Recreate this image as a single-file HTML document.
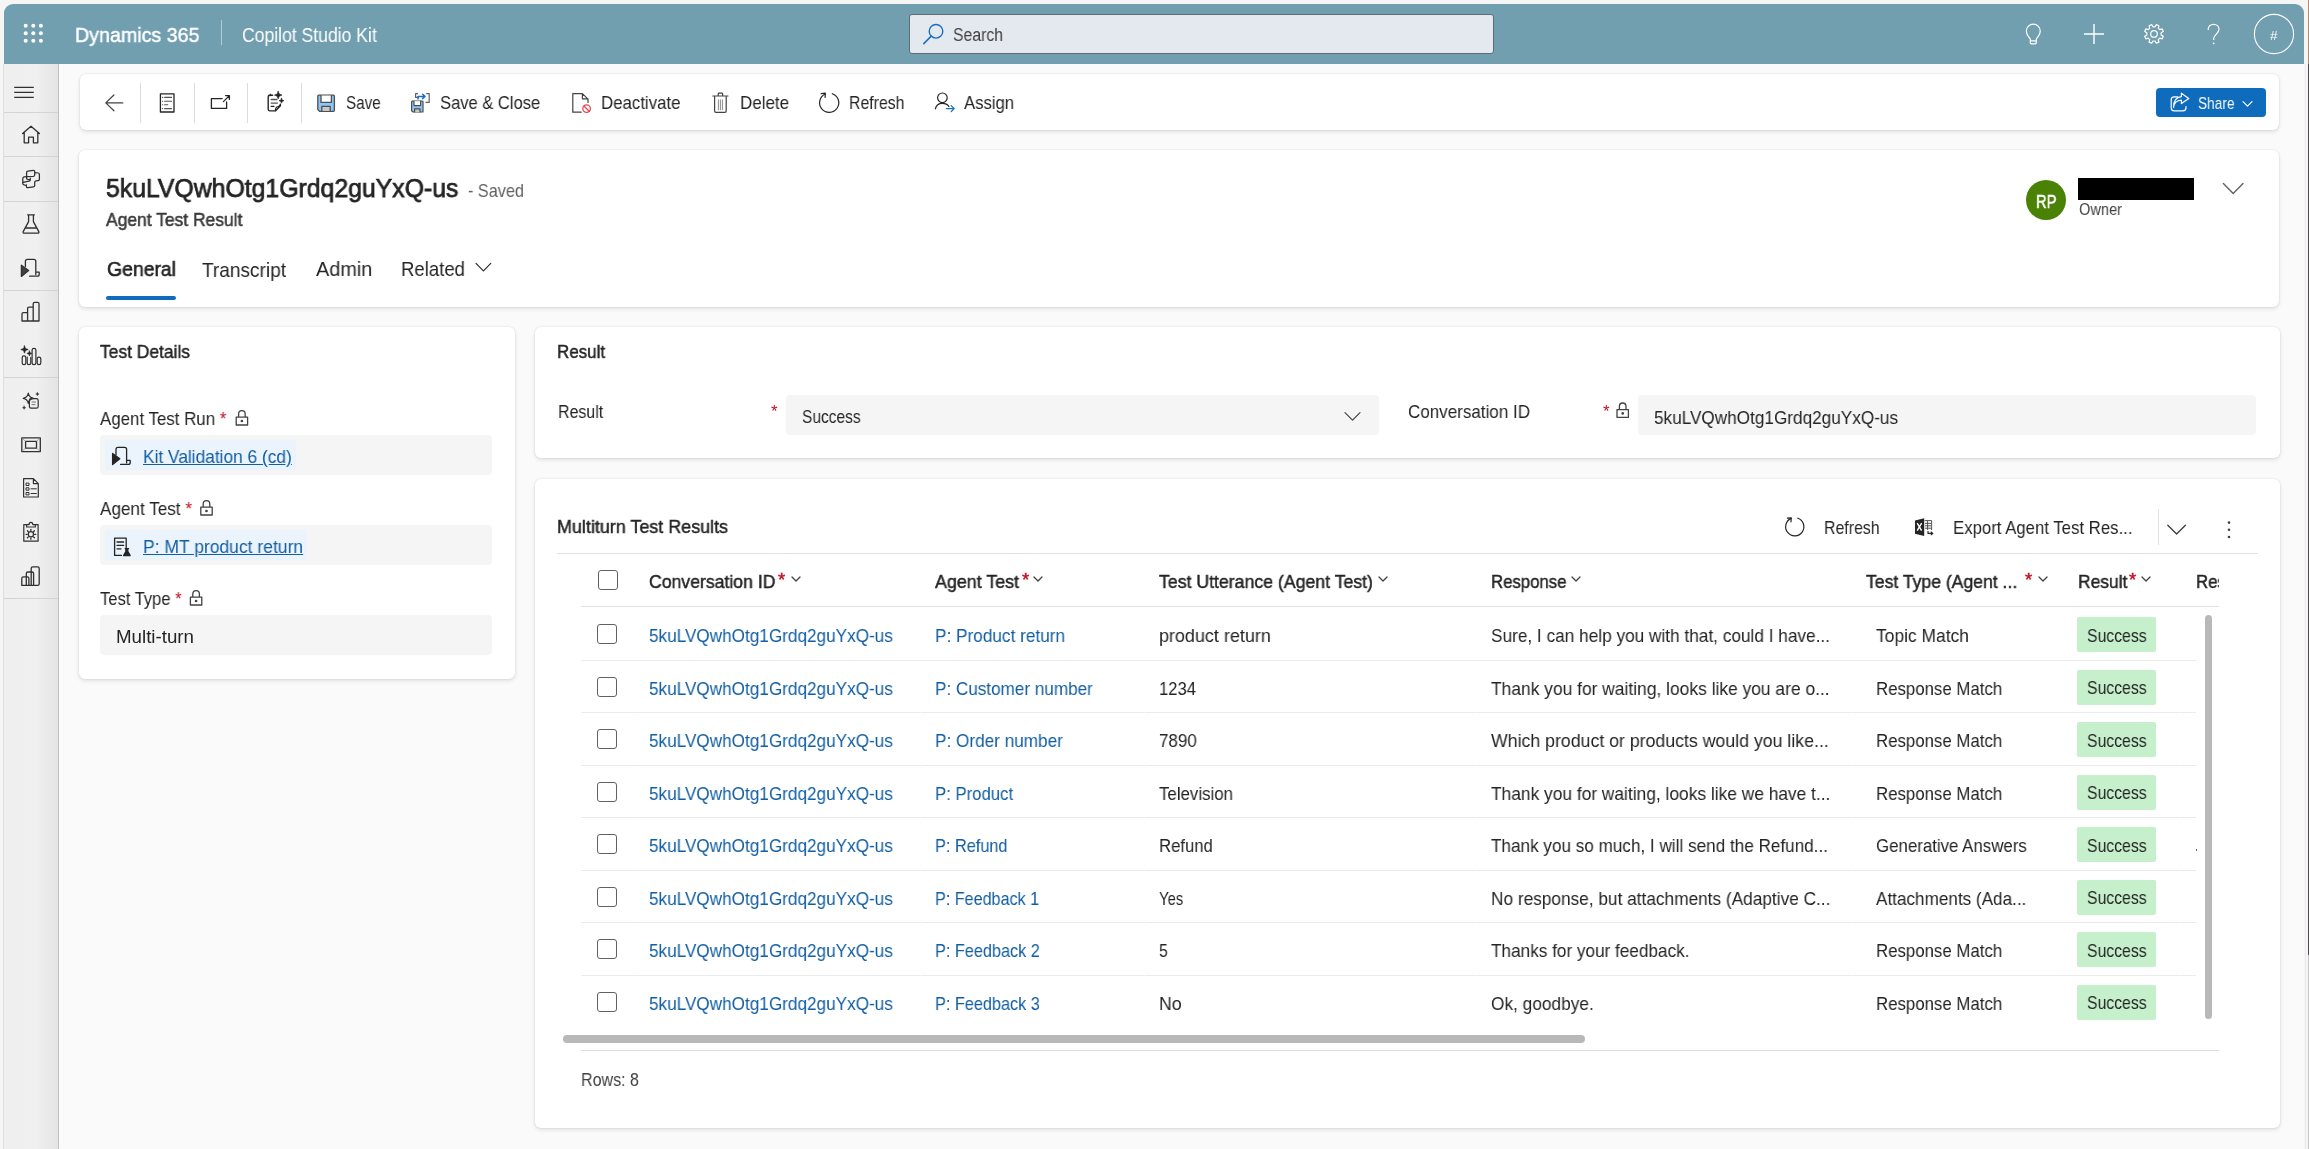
<!DOCTYPE html>
<html><head><meta charset="utf-8">
<style>
html,body{margin:0;padding:0;}
body{width:2309px;height:1149px;overflow:hidden;position:relative;background:#f5f5f5;font-family:"Liberation Sans",sans-serif;color:#242424;}
.a{position:absolute;}
.t{position:absolute;white-space:nowrap;line-height:1;will-change:transform;}
.sx{transform:scaleX(0.932);transform-origin:0 0;}
.b{font-weight:400;-webkit-text-stroke:0.45px currentColor;}
.card{position:absolute;background:#fff;border-radius:6px;box-shadow:0 0 2px rgba(0,0,0,0.12),0 2px 4px rgba(0,0,0,0.10);}
svg{position:absolute;overflow:visible;}
.ic{fill:none;stroke:#424242;stroke-width:1.3;stroke-linecap:round;stroke-linejoin:round;}
.lnk{color:#115ea3;}
.req{color:#c50f1f;}
.hl{position:absolute;height:1px;background:#e0e0e0;}
.vl{position:absolute;width:1px;background:#e0e0e0;}
.cb{position:absolute;width:18px;height:18px;border:1px solid #616161;border-radius:3px;box-sizing:content-box;background:#fff}
.badge{position:absolute;width:79px;height:35px;background:#c6efcc;border-radius:2px}
</style></head>
<body>
<!-- right edge strip -->
<div class="a" style="left:2308px;top:0;width:1px;height:64px;background:#b9876a"></div>
<div class="a" style="left:2308px;top:64px;width:1px;height:891px;background:#4d4b4e"></div>
<div class="a" style="left:2308px;top:955px;width:1px;height:194px;background:#c8c8c8"></div>
<div class="a" style="left:2305px;top:64px;width:1px;height:1085px;background:#ececec"></div>

<!-- app header -->
<div id="hdr" class="a" style="left:4px;top:4px;width:2300px;height:60px;background:#729fb0;border-radius:9px 9px 0 0;"></div>
<div class="t b" style="left:74.9px;top:24.93px;font-size:20.2px;transform:scaleX(0.9725);transform-origin:0 0;color:#fff">Dynamics 365</div>
<div class="a" style="left:221px;top:20px;width:1px;height:25px;background:rgba(255,255,255,0.45)"></div>
<div class="t" style="left:242.2px;top:26.43px;font-size:19.5px;transform:scaleX(0.9011);transform-origin:0 0;color:#fff">Copilot Studio Kit</div>
<div class="a" style="left:909px;top:14px;width:583px;height:38px;background:#e3e9ee;border:1px solid #5f6b72;border-radius:3px"></div>
<div class="t" style="left:952.7px;top:25.82px;font-size:18.8px;transform:scaleX(0.8401);transform-origin:0 0;color:#424242">Search</div>

<!-- sidebar -->
<div id="side" class="a" style="left:4px;top:64px;width:54px;height:1085px;background:linear-gradient(90deg,#efefef 0%,#f0f0f0 60%,#e4e4e4 100%);border-right:1px solid #bfbfbf"></div>
<div class="a" style="left:3px;top:64px;width:1px;height:1085px;background:#dedede"></div>

<!-- main bg -->
<div class="a" style="left:59px;top:64px;width:2245px;height:1085px;background:#fafafa"></div>

<!-- command bar -->
<div class="card" style="left:80px;top:74px;width:2199px;height:56px;"></div>
<div class="t" style="left:345.7px;top:94.09px;font-size:18.6px;transform:scaleX(0.8186);transform-origin:0 0;">Save</div>
<div class="t" style="left:440.3px;top:94.09px;font-size:18.6px;transform:scaleX(0.8894);transform-origin:0 0;">Save &amp; Close</div>
<div class="t" style="left:600.5px;top:94.09px;font-size:18.6px;transform:scaleX(0.9049);transform-origin:0 0;">Deactivate</div>
<div class="t" style="left:740px;top:94.09px;font-size:18.6px;transform:scaleX(0.9116);transform-origin:0 0;">Delete</div>
<div class="t" style="left:849.2px;top:94.09px;font-size:18.6px;transform:scaleX(0.8509);transform-origin:0 0;">Refresh</div>
<div class="t" style="left:964px;top:94.09px;font-size:18.6px;transform:scaleX(0.8959);transform-origin:0 0;">Assign</div>
<div class="a" style="left:2156px;top:88px;width:110px;height:29px;background:#0f6cbd;border-radius:4px"></div>
<div class="t" style="left:2197.7px;top:95.45px;font-size:17px;transform:scaleX(0.8044);transform-origin:0 0;color:#fff">Share</div>

<!-- header card -->
<div class="card" style="left:79px;top:150px;width:2200px;height:157px;"></div>
<div class="t b" style="left:105.6px;top:175.13px;font-size:26.2px;transform:scaleX(0.9469);transform-origin:0 0;-webkit-text-stroke:0.75px #242424">5kuLVQwhOtg1Grdq2guYxQ-us</div>
<div class="t" style="left:468px;top:182.09px;font-size:18.6px;transform:scaleX(0.8737);transform-origin:0 0;color:#616161">- Saved</div>
<div class="t b" style="left:105.6px;top:210.59px;font-size:18.6px;transform:scaleX(0.9382);transform-origin:0 0;color:#3a3a3a;-webkit-text-stroke:0.55px #3a3a3a">Agent Test Result</div>
<div class="t b" style="left:106.5px;top:258.63px;font-size:20.2px;transform:scaleX(0.9606);transform-origin:0 0;-webkit-text-stroke:0.6px #242424">General</div>
<div class="t" style="left:202px;top:259.63px;font-size:20.2px;transform:scaleX(0.9438);transform-origin:0 0;color:#242424">Transcript</div>
<div class="t" style="left:315.7px;top:259.13px;font-size:20.2px;transform:scaleX(0.9837);transform-origin:0 0;color:#242424">Admin</div>
<div class="t" style="left:401px;top:259.13px;font-size:20.2px;transform:scaleX(0.9196);transform-origin:0 0;color:#242424">Related</div>
<div class="a" style="left:106px;top:296px;width:70px;height:4px;background:#0f6cbd;border-radius:2px"></div>
<div class="a" style="left:2026px;top:180px;width:40px;height:40px;border-radius:50%;background:#498205"></div>
<div class="a" style="left:2078px;top:178px;width:116px;height:22px;background:#000"></div>
<div class="t" style="left:2078.9px;top:202.20px;font-size:16px;transform:scaleX(0.9125);transform-origin:0 0;color:#424242">Owner</div>

<!-- test details card -->
<div class="card" style="left:79px;top:327px;width:436px;height:352px;"></div>
<div class="t b" style="left:100px;top:342.59px;font-size:18.6px;transform:scaleX(0.9364);transform-origin:0 0;">Test Details</div>
<div class="t" style="left:100.4px;top:410.09px;font-size:18.6px;transform:scaleX(0.9078);transform-origin:0 0;color:#242424">Agent Test Run <span class="req">*</span></div>
<div class="a" style="left:100px;top:435px;width:392px;height:40px;background:#f5f5f5;border-radius:4px"></div>
<div class="a" style="left:105.4px;top:439.7px;width:191px;height:30px;background:#ebf3fc;border-radius:4px"></div>
<div class="t lnk" style="left:142.7px;top:447.99px;font-size:18.6px;transform:scaleX(0.9308);transform-origin:0 0;text-decoration:underline">Kit Validation 6 (cd)</div>
<div class="t" style="left:100.4px;top:500.09px;font-size:18.6px;transform:scaleX(0.9208);transform-origin:0 0;color:#242424">Agent Test <span class="req">*</span></div>
<div class="a" style="left:100px;top:525px;width:392px;height:40px;background:#f5f5f5;border-radius:4px"></div>
<div class="a" style="left:105.4px;top:529.7px;width:202px;height:30px;background:#ebf3fc;border-radius:4px"></div>
<div class="t lnk" style="left:142.7px;top:537.99px;font-size:18.6px;transform:scaleX(0.9408);transform-origin:0 0;text-decoration:underline">P: MT product return</div>
<div class="t" style="left:100.4px;top:590.09px;font-size:18.6px;transform:scaleX(0.8896);transform-origin:0 0;color:#242424">Test Type <span class="req">*</span></div>
<div class="a" style="left:100px;top:615px;width:392px;height:40px;background:#f5f5f5;border-radius:4px"></div>
<div class="t" style="left:116.3px;top:628.49px;font-size:18.6px;transform:scaleX(1.0065);transform-origin:0 0;">Multi-turn</div>

<!-- result card -->
<div class="card" style="left:535px;top:327px;width:1745px;height:131px;"></div>
<div class="t b" style="left:556.5px;top:342.59px;font-size:18.6px;transform:scaleX(0.9124);transform-origin:0 0;">Result</div>
<div class="t" style="left:557.6px;top:402.89px;font-size:18.6px;transform:scaleX(0.8574);transform-origin:0 0;color:#242424">Result</div>
<div class="t req" style="left:771px;top:402.5px;font-size:17px">*</div>
<div class="a" style="left:786px;top:395px;width:593px;height:40px;background:#f5f5f5;border-radius:4px"></div>
<div class="t" style="left:802.4px;top:408.09px;font-size:18.6px;transform:scaleX(0.8338);transform-origin:0 0;">Success</div>
<div class="t" style="left:1408px;top:403.39px;font-size:18.6px;transform:scaleX(0.9150);transform-origin:0 0;color:#242424">Conversation ID</div>
<div class="t req" style="left:1603px;top:402.5px;font-size:17px">*</div>
<div class="a" style="left:1638px;top:395px;width:618px;height:40px;background:#f5f5f5;border-radius:4px"></div>
<div class="t" style="left:1653.5px;top:408.59px;font-size:18.6px;transform:scaleX(0.9234);transform-origin:0 0;">5kuLVQwhOtg1Grdq2guYxQ-us</div>

<!-- subgrid card -->
<div class="card" style="left:535px;top:479px;width:1745px;height:649px;"></div>
<div class="t b" style="left:557px;top:518.29px;font-size:18.6px;transform:scaleX(0.9639);transform-origin:0 0;">Multiturn Test Results</div>
<div class="t" style="left:1824px;top:518.89px;font-size:18.6px;transform:scaleX(0.8539);transform-origin:0 0;">Refresh</div>
<div class="t" style="left:1953px;top:519.09px;font-size:18.6px;transform:scaleX(0.9014);transform-origin:0 0;">Export Agent Test Res...</div>
<div class="vl" style="left:2158px;top:509px;height:36px"></div>
<div class="hl" style="left:557px;top:553px;width:1701px"></div>

<!-- ICONS START -->
<!-- waffle -->
<svg style="left:0;top:0" width="60" height="60"><g fill="#fff">
<circle cx="25.7" cy="25.7" r="2"/><circle cx="33.3" cy="25.7" r="2"/><circle cx="40.9" cy="25.7" r="2"/>
<circle cx="25.7" cy="33.3" r="2"/><circle cx="33.3" cy="33.3" r="2"/><circle cx="40.9" cy="33.3" r="2"/>
<circle cx="25.7" cy="40.8" r="2"/><circle cx="33.3" cy="40.8" r="2"/><circle cx="40.9" cy="40.8" r="2"/></g></svg>
<!-- search icon -->
<svg style="left:920px;top:20px" width="30" height="30"><circle cx="16" cy="11.3" r="6.8" fill="none" stroke="#1a6fbf" stroke-width="1.4"/><path d="M11.2 16.1 L3.8 23.6" stroke="#1a6fbf" stroke-width="1.5" stroke-linecap="round"/></svg>
<!-- lightbulb -->
<svg style="left:2020px;top:20px" width="28" height="28"><path d="M10.3 18.8 C8.4 16.8 6.4 14.6 6.4 11 A6.9 6.9 0 0 1 20.2 11 C20.2 14.6 18.2 16.8 16.3 18.8 V22.8 Q16.3 23.8 15.3 23.8 H11.3 Q10.3 23.8 10.3 22.8 Z M10.3 20.9 H16.3" fill="none" stroke="#fff" stroke-width="1.2" stroke-linejoin="round"/></svg>
<!-- plus -->
<svg style="left:2080px;top:20px" width="28" height="28"><path d="M14 4 V24 M4 14 H24" stroke="#fff" stroke-width="1.4"/></svg>
<!-- gear -->
<svg style="left:2140px;top:20px" width="28" height="28"><path d="M23.32 16.21 L22.22 18.85 L19.79 18.18 L18.28 19.69 L18.95 22.12 L16.31 23.22 L15.07 21.02 L12.93 21.02 L11.69 23.22 L9.05 22.12 L9.72 19.69 L8.21 18.18 L5.78 18.85 L4.68 16.21 L6.88 14.97 L6.88 12.83 L4.68 11.59 L5.78 8.95 L8.21 9.62 L9.72 8.11 L9.05 5.68 L11.69 4.58 L12.93 6.78 L15.07 6.78 L16.31 4.58 L18.95 5.68 L18.28 8.11 L19.79 9.62 L22.22 8.95 L23.32 11.59 L21.12 12.83 L21.12 14.97Z" fill="none" stroke="#fff" stroke-width="1.2" stroke-linejoin="round"/><circle cx="14" cy="13.9" r="3.3" fill="none" stroke="#fff" stroke-width="1.2"/></svg>
<!-- question -->
<svg style="left:2200px;top:20px" width="28" height="28"><path d="M8.2 9.4 C8.2 6.2 10.6 4.3 13.6 4.3 C16.6 4.3 19 6.3 19 9.3 C19 13.3 14.2 14.6 13.7 18.4 L13.7 19.5" fill="none" stroke="#fff" stroke-width="1.2" stroke-linecap="round"/><circle cx="13.7" cy="23.3" r="0.9" fill="#fff"/></svg>
<!-- avatar -->
<svg style="left:2250px;top:10px" width="48" height="48"><circle cx="24" cy="24" r="19.6" fill="none" stroke="#fff" stroke-width="1.1"/></svg>
<div class="t" style="left:2269.6px;top:29.3px;font-size:13.6px;color:#fff">#</div>

<!-- sidebar icons -->
<svg style="left:0;top:60px" width="60" height="560" class="sb">
<g fill="none" stroke="#303030" stroke-width="1.3" stroke-linejoin="round" stroke-linecap="round" transform="translate(0,-60)">
<path d="M14.2 87.4 H33.8 M14.2 92.4 H33.8 M14.2 97.4 H33.8" stroke-linecap="butt"/>
<!-- home -->
<path d="M22.6 133.6 L31 126.2 L39.4 133.6 M24.2 132.4 V142.8 H28.6 V137.2 H33.4 V142.8 H37.8 V132.4"/>
<!-- python -->
<path d="M26.6 178.4 V172.4 Q26.6 171.2 27.8 171.1 L33.4 170.4 Q34.7 170.3 34.7 171.6 V175 Q34.7 176.2 33.5 176.3 L26.6 176.7" stroke-width="1.25"/>
<path d="M26.6 178.2 Q26.6 179.4 27.8 179.5 L30.3 179.7 V178.2 M30.3 179.7 Q30.3 181 29 181.2 L22.9 182.4" stroke-width="1.25"/>
<path d="M26.5 176.6 L24.1 176.9 Q22.8 177.1 22.8 178.4 V183.6 Q22.8 184.6 24 184.9 L26.4 185.5" stroke-width="1.25"/>
<path d="M34.7 172.7 L38.2 173 Q39.4 173.1 39.4 174.4 V179.2 Q39.4 180.5 38.1 180.6 L36 180.8 Q34.7 181 34.7 182.2 V185.4 Q34.7 186.6 33.5 186.8 L28 187.7 Q26.4 187.9 26.4 186.3 V184.8" stroke-width="1.25"/>
<!-- flask -->
<path d="M27.6 214.8 H34.4 M28.6 214.8 V221.6 L23.2 231.6 Q22.6 233.2 24.4 233.2 H37.6 Q39.4 233.2 38.8 231.6 L33.4 221.6 V214.8 M25.4 228 H36.6"/>
<!-- play doc -->
<path d="M25.4 266.6 V261.4 Q25.4 259.4 27.4 259.4 H33.8 Q35.8 259.4 35.8 261.4 V272.2 M29.6 276.2 H37.4 Q39.2 276.2 39.2 274.2 V272.2 H35.8 V274.6"/>
<path d="M21.4 265.2 L28.6 270.6 L21.4 276.4 Z" fill="#424242"/>
<!-- chart -->
<path d="M22 321 V314 Q22 312.6 23.4 312.6 H27.6 V321 Z M27.6 321 V308.6 Q27.6 307.2 29 307.2 H33.2 V321 Z M33.2 321 V303.8 Q33.2 302.4 34.6 302.4 H37.6 Q39 302.4 39 303.8 V321 Z M22 321 H39"/>
<!-- sparkle chart -->
<path d="M22.2 357.6 Q22.2 355.9 24 355.9 Q25.8 355.9 25.8 357.6 V362.9 Q25.8 364.6 24 364.6 Q22.2 364.6 22.2 362.9 Z" stroke-width="1.2"/>
<path d="M27.2 357.2 V362.9 Q27.2 364.6 29 364.6 Q30.8 364.6 30.8 362.9 V357.4" stroke-width="1.2"/>
<path d="M32.1 350 Q32.1 348.3 34 348.3 Q35.9 348.3 35.9 350 V362.9 Q35.9 364.6 34 364.6 Q32.1 364.6 32.1 362.9 Z" stroke-width="1.2"/>
<path d="M37.2 358.8 Q37.2 357.1 39 357.1 Q40.8 357.1 40.8 358.8 V362.9 Q40.8 364.6 39 364.6 Q37.2 364.6 37.2 362.9 Z" stroke-width="1.2"/>
<path d="M24.5 345.8 L25.5 348.5 L28.2 349.5 L25.5 350.5 L24.5 353.2 L23.5 350.5 L20.8 349.5 L23.5 348.5Z" fill="#242424" stroke="#242424" stroke-width="0.6"/>
<path d="M29.4 350.9 L30.1 352.7 L31.9 353.4 L30.1 354.1 L29.4 355.9 L28.7 354.1 L26.9 353.4 L28.7 352.7Z" fill="#242424" stroke="#242424" stroke-width="0.6"/>
<!-- sparkle doc -->
<path d="M28.3 393.2 Q29 397.6 33.4 398.3 Q29 399 28.3 403.4 Q27.6 399 23.2 398.3 Q27.6 397.6 28.3 393.2Z" stroke-width="1.2"/>
<path d="M29.4 403 V400.2 Q29.4 398.6 31 398.6 H36.4 Q38.2 398.6 38.2 400.4 V406.4 Q38.2 408.2 36.4 408.2 H31 Q29.4 408.2 29.4 406.6 Z" stroke-width="1.2"/>
<path d="M32 402 H35.6 M32 404.6 H35" stroke-width="1" stroke="#777"/>
<path d="M37.4 392.4 L37.9 393.6 L39.1 394.1 L37.9 394.6 L37.4 395.8 L36.9 394.6 L35.7 394.1 L36.9 393.6Z" fill="#242424" stroke-width="0.4"/>
<path d="M24.1 406 L24.6 407.2 L25.8 407.7 L24.6 408.2 L24.1 409.4 L23.6 408.2 L22.4 407.7 L23.6 407.2Z" fill="#242424" stroke-width="0.4"/>
<!-- frame -->
<path d="M21.8 437.9 H40.3 V451.6 H21.8 Z" stroke-width="1.3"/>
<path d="M25.6 441.3 H36.5 V448.2 H25.6 Z" stroke-width="1.3"/>
<path d="M22.6 438.7 L25.2 441 M39.5 438.7 L36.9 441 M22.6 450.8 L25.2 448.5 M39.5 450.8 L36.9 448.5" stroke-width="0.7" stroke="#888"/>
<!-- doc list -->
<path d="M23.6 478.7 H33.4 L38.3 483.6 V497 H23.6 Z M33.4 478.7 V483.6 H38.3" stroke-width="1.2"/>
<path d="M26.4 483.1 h2.6 v2.4 h-2.6z M26.4 487.8 h2.6 v2.4 h-2.6z M26.4 492.5 h2.6 v2.4 h-2.6z M31 488.8 H36.4 M31 493.5 H36.4" stroke-width="1"/>
<!-- clipboard gear -->
<path d="M26.6 524.6 H23.8 V541.2 H38.1 V524.6 H35.3 M26.6 524.6 V527 H35.3 V524.6 H32.8 Q32.8 522.4 30.95 522.4 Q29.1 522.4 29.1 524.6 Z" stroke-width="1.2"/>
<circle cx="30.9" cy="534.3" r="2.6" stroke-width="1.2"/>
<path d="M30.9 529.4 V530.6 M30.9 538 V539.2 M26 534.3 H27.2 M34.6 534.3 H35.8 M27.4 530.8 L28.3 531.7 M33.5 536.9 L34.4 537.8 M27.4 537.8 L28.3 536.9 M33.5 531.7 L34.4 530.8" stroke-width="1.3"/>
<!-- chart 2 -->
<path d="M21.8 585.4 V578.4 Q21.8 576.8 23.4 576.8 H27.3 Q28.9 576.8 28.9 578.4 V585.4 Z M26.3 585.4 V573.6 Q26.3 572 27.9 572 H32 Q33.6 572 33.6 573.6 V585.4 M31.2 585.4 V568.4 Q31.2 566.8 32.8 566.8 H37.6 Q39.2 566.8 39.2 568.4 V583.8 Q39.2 585.4 37.6 585.4 H21.8" stroke-width="1.3"/>
</g></svg>
<div class="hl" style="left:4px;top:112px;width:54px;background:#d4d4d4"></div>
<div class="hl" style="left:4px;top:156px;width:54px;background:#d4d4d4"></div>
<div class="hl" style="left:4px;top:201px;width:54px;background:#d4d4d4"></div>
<div class="hl" style="left:4px;top:290px;width:54px;background:#d4d4d4"></div>
<div class="hl" style="left:4px;top:377px;width:54px;background:#d4d4d4"></div>
<div class="hl" style="left:4px;top:598px;width:54px;background:#d4d4d4"></div>

<!-- command bar icons -->
<svg style="left:80px;top:74px" width="1000" height="56">
<g fill="none" stroke="#424242" stroke-width="1.2" stroke-linejoin="round" stroke-linecap="round" transform="translate(-80,-74)">
<path d="M122.8 102.9 H105.8 M113.9 95 L105.8 102.9 L113.9 110.8"/>
<path d="M160.4 93.8 H174 V112 H160.4 Z" stroke="#242424" stroke-width="1.3"/>
<path d="M164.6 97.4 H171.6 M164.6 101.2 H171.6 M164.6 104.8 H167.8 M164.6 108.6 H171.6" stroke="#555" stroke-width="1.1"/>
<path d="M162.4 97.4 h0.3 M162.4 101.2 h0.3 M162.4 104.8 h0.3 M162.4 108.6 h0.3" stroke="#555" stroke-width="1.1"/>
<path d="M222.2 98.6 H211.4 V108.4 H226.6 V102" stroke="#242424" stroke-width="1.3"/>
<path d="M223.4 101.6 L229.4 95.6 M225.6 95.6 H229.4 V99.4" stroke="#242424" stroke-width="1.3"/>
<path d="M272.6 95.3 H269.8 Q268.2 95.3 268.2 97 V109.2 Q268.2 110.9 269.9 110.9 H275.4 L280.4 105.8 V104.3" stroke="#242424" stroke-width="1.4"/>
<path d="M275.5 110.6 Q275.2 107.4 277.6 106.8 Q279.7 106.3 280.3 104.8" stroke="#242424" stroke-width="1.1"/>
<path d="M269.5 95.4 L270.4 93.7 L271.3 95.4Z" fill="#242424" stroke="#242424" stroke-width="0.5"/>
<path d="M271.2 99.5 H276.9 M271.2 103.1 H277.4" stroke="#555" stroke-width="1.3"/>
<path d="M271.2 106.4 H273.9" stroke="#242424" stroke-width="1.3"/>
<path d="M278.2 91.3 L279.3 94 L282 95.1 L279.3 96.2 L278.2 98.9 L277.1 96.2 L274.4 95.1 L277.1 94Z" fill="#242424" stroke="#242424" stroke-width="0.6"/>
<path d="M281.5 98.2 L282.2 100 L284 100.7 L282.2 101.4 L281.5 103.2 L280.8 101.4 L279 100.7 L280.8 100Z" fill="#242424" stroke="#242424" stroke-width="0.6"/>
<!-- save -->
<path d="M318.6 95.2 H333.4 Q334.4 95.2 334.4 96.2 V110.6 Q334.4 111.4 333.4 111.4 H319.8 L317.8 109.6 V96.2 Q317.8 95.2 318.6 95.2Z" fill="#8cc6f7" stroke="#4f4f4f" stroke-width="1.3"/>
<path d="M321 95.6 V102.4 H331.4 V95.6" fill="#fff" stroke="#4f4f4f" stroke-width="1.3"/>
<path d="M321.8 111 V106.4 H330.2 V111" fill="#c8c8c8" stroke="#4f4f4f" stroke-width="1.3"/>
<!-- save & close -->
<path d="M412 101 H422.2 Q423 101 423 101.8 V112 H413 L411.6 110.8 V101.6Z" fill="#8cc6f7" stroke="#4f4f4f" stroke-width="1.2"/>
<path d="M414 101.2 V105.6 H420.6 V101.2" fill="#fff" stroke="#4f4f4f" stroke-width="1.2"/>
<path d="M414.6 112 V108.8 H420 V112" fill="#c8c8c8" stroke="#4f4f4f" stroke-width="1.2"/>
<path d="M418.6 97.4 H415.6 V93.6 H418 M426.2 93.6 H429.2 V102.4 H425.6" stroke="#616161" stroke-width="1.2" stroke-linecap="butt"/>
<path d="M418 99 V96.4 H424.8 M422.6 94.2 L425 96.4 L422.6 98.6" stroke="#1a6fbf" stroke-width="1.5"/>
<!-- deactivate -->
<path d="M582.4 93.6 H572.8 V112.2 H581.2 M582.4 93.6 L588 99.2 V102.4 M582.4 93.6 V98.8 H588" stroke="#424242" stroke-width="1.2"/>
<circle cx="586.6" cy="108.6" r="3.8" stroke="#e5484d" stroke-width="1.3"/><path d="M584 106 L589.2 111.2" stroke="#e5484d" stroke-width="1.3"/>
<!-- delete -->
<path d="M712.8 96 H728 M714.6 96.4 V111 Q714.6 112.4 716 112.4 H724.8 Q726.2 112.4 726.2 111 V96.4 M718.2 95.6 V94 Q718.2 93.2 719 93.2 H721.8 Q722.6 93.2 722.6 94 V95.6" stroke="#424242" stroke-width="1.2"/>
<path d="M718.4 99.8 V109.8 M720.4 99.8 V109.8 M722.4 99.8 V109.8" stroke="#707070" stroke-width="0.8"/>
<!-- refresh -->
<path d="M832.3 93.7 A9.6 9.6 0 1 1 825.3 94" stroke="#242424" stroke-width="1.2"/>
<path d="M821.2 93.7 L825.3 93.2 L825.1 97.4" stroke="#242424" stroke-width="1.2"/>
<!-- assign -->
<circle cx="942.4" cy="97.8" r="4.8" stroke="#242424" stroke-width="1.2"/>
<path d="M935.4 108.8 Q936.6 103.4 942.4 103.4 Q946.8 103.4 948.8 106.4" stroke="#242424" stroke-width="1.2"/>
<path d="M946.4 108.6 H954.2 M951.2 105.6 L954.2 108.6 L951.2 111.6" stroke="#1a6fbf" stroke-width="1.3"/>
</g></svg>
<!-- separators -->
<div class="vl" style="left:140px;top:83px;height:40px;background:#dcdcdc"></div>
<div class="vl" style="left:194px;top:83px;height:40px;background:#dcdcdc"></div>
<div class="vl" style="left:247px;top:83px;height:40px;background:#dcdcdc"></div>
<div class="vl" style="left:301px;top:83px;height:40px;background:#dcdcdc"></div>
<!-- share icon + chevron -->
<svg style="left:2156px;top:88px" width="110" height="29"><g fill="none" stroke="#fff" stroke-width="1.2" stroke-linejoin="round" stroke-linecap="round">
<path d="M21.6 8.8 H18.2 Q15.2 8.8 15.2 11.8 V19.8 Q15.2 22.8 18.2 22.8 H27 Q30 22.8 30 19.8 V18.6"/>
<path d="M17.6 19.4 Q18.2 12.6 25.4 12.2 V15.6 L32.8 10.4 L25.4 5.2 V8.6 Q17.4 9.4 17.6 19.4Z"/>
<path d="M87 13.6 L91.5 18.1 L96 13.6"/></g></svg>

<!-- header card icons -->
<svg style="left:0;top:0" width="2309" height="320"><g fill="none" stroke="#424242" stroke-width="1.3" stroke-linejoin="round" stroke-linecap="round">
<path d="M476 263.4 L483.4 270.8 L490.8 263.4" stroke-width="1.1" stroke="#242424"/>
<path d="M2223.4 183.6 L2233.2 193.4 L2243 183.6" stroke="#616161" stroke-width="1.4"/>
</g></svg>
<div class="t b" style="left:2036.4px;top:192.5px;font-size:18.6px;transform:scaleX(0.79);transform-origin:0 0;color:#fff;-webkit-text-stroke:0.55px #fff">RP</div>

<!-- test details icons -->
<svg style="left:0;top:0" width="2309" height="700"><g fill="none" stroke="#424242" stroke-width="1.3" stroke-linejoin="round" stroke-linecap="round">
<!-- locks -->
<path d="M236.2 417.2 H247.6 V425 H236.2 Z M238.6 417.2 V414 Q238.6 410.6 241.9 410.6 Q245.2 410.6 245.2 414 V417.2"/><circle cx="241.9" cy="421" r="0.7" fill="#424242"/>
<path d="M200.8 507.2 H212.2 V515 H200.8 Z M203.2 507.2 V504 Q203.2 500.6 206.5 500.6 Q209.8 500.6 209.8 504 V507.2"/><circle cx="206.5" cy="511" r="0.7" fill="#424242"/>
<path d="M190.4 597.2 H201.8 V605 H190.4 Z M192.8 597.2 V594 Q192.8 590.6 196.1 590.6 Q199.4 590.6 199.4 594 V597.2"/><circle cx="196.1" cy="601" r="0.7" fill="#424242"/>
<path d="M1617 409.6 H1628.4 V417.4 H1617 Z M1619.4 409.6 V406.4 Q1619.4 403 1622.7 403 Q1626 403 1626 406.4 V409.6"/><circle cx="1622.7" cy="413.4" r="0.7" fill="#424242"/>
<!-- play doc lookup -->
<path d="M116 455 V449.4 Q116 447.4 118 447.4 H124.6 Q126.6 447.4 126.6 449.4 V460.4 M120.6 464.4 H128.4 Q130.2 464.4 130.2 462.4 V460.4 H126.6 V462.8" stroke="#242424"/>
<path d="M112.6 453.4 L119.8 458.8 L112.6 464.6 Z" fill="#242424" stroke="#242424"/>
<!-- agent test lookup icon -->
<path d="M126.2 550.4 V538.2 H114.6 V555.4 H121.4 M117 542 H123.6 M117 545.4 H123.6 M117 548.8 H121" stroke="#242424"/>
<path d="M125.2 548.6 H128.6 M126 548.6 V551.4 L123.6 555.6 H130.2 L127.8 551.4 V548.6" stroke="#242424" fill="#242424"/>
<!-- result dropdown chevron -->
<path d="M1345 412.6 L1352.5 420.1 L1360 412.6" stroke="#424242" stroke-width="1.15"/>
<!-- subgrid toolbar -->
<path d="M1797.8 518.2 A9.1 9.1 0 1 1 1791.2 518.4" stroke="#242424" stroke-width="1.2"/>
<path d="M1787.4 518.2 L1791.2 517.8 L1791 521.8" stroke="#242424" stroke-width="1.2"/>
<path d="M2167.8 525.2 L2176.6 534 L2185.4 525.2" stroke="#424242" stroke-width="1.4"/>
</g>
<g fill="#424242"><circle cx="2229" cy="522.6" r="1.3"/><circle cx="2229" cy="529.8" r="1.3"/><circle cx="2229" cy="537" r="1.3"/></g>
<!-- excel -->
<path d="M1915 520.4 L1924.2 518.2 V536 L1915 533.8 Z" fill="#242424"/>
<path d="M1917.2 523.2 L1921.6 530.6 M1921.6 523.2 L1917.2 530.6" stroke="#fff" stroke-width="1.4"/>
<path d="M1924.6 520.6 H1931.6 V530 M1925 523.4 H1931 M1925 525.8 H1931 M1925 528.2 H1931 M1927.6 520.8 V530" stroke="#424242" stroke-width="0.9" fill="none"/>
<path d="M1928 531 V533.4 H1932.6 M1930.8 531.6 L1932.8 533.4 L1930.8 535.2" stroke="#242424" stroke-width="1.1" fill="none"/>
</svg>
<!-- ICONS END -->
<div id="grid">
<div class="cb" style="left:598px;top:570px"></div>
<div class="t b" style="left:648.8px;top:572.6px;font-size:18.6px;transform:scaleX(0.948);transform-origin:0 0">Conversation ID</div>
<div class="t req b" style="left:778.3px;top:570.6px;font-size:18.6px">*</div>
<svg style="left:790.5px;top:576px" width="10" height="6" viewBox="0 0 10 6"><path d="M1 1 L5 5 L9 1" class="ic" stroke-width="1.4"/></svg>
<div class="t b" style="left:935px;top:572.6px;font-size:18.6px;transform:scaleX(0.96);transform-origin:0 0">Agent Test</div>
<div class="t req b" style="left:1022px;top:570.6px;font-size:18.6px">*</div>
<svg style="left:1033px;top:576px" width="10" height="6" viewBox="0 0 10 6"><path d="M1 1 L5 5 L9 1" class="ic" stroke-width="1.4"/></svg>
<div class="t b" style="left:1158.7px;top:572.6px;font-size:18.6px;transform:scaleX(0.951);transform-origin:0 0">Test Utterance (Agent Test)</div>
<svg style="left:1377.5px;top:576px" width="10" height="6" viewBox="0 0 10 6"><path d="M1 1 L5 5 L9 1" class="ic" stroke-width="1.4"/></svg>
<div class="t b" style="left:1491px;top:572.6px;font-size:18.6px;transform:scaleX(0.9);transform-origin:0 0">Response</div>
<svg style="left:1571px;top:576px" width="10" height="6" viewBox="0 0 10 6"><path d="M1 1 L5 5 L9 1" class="ic" stroke-width="1.4"/></svg>
<div class="t b" style="left:1866.2px;top:572.6px;font-size:18.6px;transform:scaleX(0.946);transform-origin:0 0">Test Type (Agent ...</div>
<div class="t req b" style="left:2024.5px;top:570.6px;font-size:18.6px">*</div>
<svg style="left:2037.5px;top:576px" width="10" height="6" viewBox="0 0 10 6"><path d="M1 1 L5 5 L9 1" class="ic" stroke-width="1.4"/></svg>
<div class="t b" style="left:2077.6px;top:572.6px;font-size:18.6px;transform:scaleX(0.937);transform-origin:0 0">Result</div>
<div class="t req b" style="left:2128.5px;top:570.6px;font-size:18.6px">*</div>
<svg style="left:2141px;top:576px" width="10" height="6" viewBox="0 0 10 6"><path d="M1 1 L5 5 L9 1" class="ic" stroke-width="1.4"/></svg>
<div class="a" style="left:2195px;top:560px;width:24px;height:40px;overflow:hidden"><div class="t b" style="left:0.5px;top:12.600000000000023px;font-size:18.6px;transform:scaleX(0.9);transform-origin:0 0">Response</div></div>
<div class="hl" style="left:581px;top:606px;width:1638px;background:#e0e0e0"></div>
<div class="cb" style="left:597px;top:624.3px"></div>
<div class="t lnk" style="left:648.7px;top:627.1px;font-size:18.6px;transform:scaleX(0.9227);transform-origin:0 0">5kuLVQwhOtg1Grdq2guYxQ-us</div>
<div class="t lnk" style="left:935px;top:627.1px;font-size:18.6px;transform:scaleX(0.9249);transform-origin:0 0">P: Product return</div>
<div class="t" style="left:1158.7px;top:627.1px;font-size:18.6px;transform:scaleX(0.9657);transform-origin:0 0">product return</div>
<div class="t" style="left:1491px;top:627.1px;font-size:18.6px;transform:scaleX(0.9265);transform-origin:0 0">Sure, I can help you with that, could I have...</div>
<div class="t" style="left:1876.4px;top:627.1px;font-size:18.6px;transform:scaleX(0.9373);transform-origin:0 0">Topic Match</div>
<div class="badge" style="left:2077px;top:617.0px"></div>
<div class="t" style="left:2087px;top:626.9px;font-size:18.6px;transform:scaleX(0.848);transform-origin:0 0">Success</div>
<div class="hl" style="left:581px;top:660.0px;width:1615px;background:#ebebeb"></div>
<div class="a" style="left:634px;top:660.0px;width:1px;height:1px;background:#f6f6f6"></div>
<div class="a" style="left:920px;top:660.0px;width:1px;height:1px;background:#f6f6f6"></div>
<div class="a" style="left:1144px;top:660.0px;width:1px;height:1px;background:#f6f6f6"></div>
<div class="a" style="left:1476px;top:660.0px;width:1px;height:1px;background:#f6f6f6"></div>
<div class="a" style="left:1851px;top:660.0px;width:1px;height:1px;background:#f6f6f6"></div>
<div class="a" style="left:2179px;top:660.0px;width:1px;height:1px;background:#f6f6f6"></div>
<div class="cb" style="left:597px;top:676.8px"></div>
<div class="t lnk" style="left:648.7px;top:679.6px;font-size:18.6px;transform:scaleX(0.9227);transform-origin:0 0">5kuLVQwhOtg1Grdq2guYxQ-us</div>
<div class="t lnk" style="left:935px;top:679.6px;font-size:18.6px;transform:scaleX(0.9199);transform-origin:0 0">P: Customer number</div>
<div class="t" style="left:1158.7px;top:679.6px;font-size:18.6px;transform:scaleX(0.8943);transform-origin:0 0">1234</div>
<div class="t" style="left:1491px;top:679.6px;font-size:18.6px;transform:scaleX(0.9360);transform-origin:0 0">Thank you for waiting, looks like you are o...</div>
<div class="t" style="left:1876.4px;top:679.6px;font-size:18.6px;transform:scaleX(0.9037);transform-origin:0 0">Response Match</div>
<div class="badge" style="left:2077px;top:669.5px"></div>
<div class="t" style="left:2087px;top:679.4px;font-size:18.6px;transform:scaleX(0.848);transform-origin:0 0">Success</div>
<div class="hl" style="left:581px;top:712.0px;width:1615px;background:#ebebeb"></div>
<div class="a" style="left:634px;top:712.0px;width:1px;height:1px;background:#f6f6f6"></div>
<div class="a" style="left:920px;top:712.0px;width:1px;height:1px;background:#f6f6f6"></div>
<div class="a" style="left:1144px;top:712.0px;width:1px;height:1px;background:#f6f6f6"></div>
<div class="a" style="left:1476px;top:712.0px;width:1px;height:1px;background:#f6f6f6"></div>
<div class="a" style="left:1851px;top:712.0px;width:1px;height:1px;background:#f6f6f6"></div>
<div class="a" style="left:2179px;top:712.0px;width:1px;height:1px;background:#f6f6f6"></div>
<div class="cb" style="left:597px;top:729.3px"></div>
<div class="t lnk" style="left:648.7px;top:732.1px;font-size:18.6px;transform:scaleX(0.9227);transform-origin:0 0">5kuLVQwhOtg1Grdq2guYxQ-us</div>
<div class="t lnk" style="left:935px;top:732.1px;font-size:18.6px;transform:scaleX(0.9236);transform-origin:0 0">P: Order number</div>
<div class="t" style="left:1158.7px;top:732.1px;font-size:18.6px;transform:scaleX(0.9136);transform-origin:0 0">7890</div>
<div class="t" style="left:1491px;top:732.1px;font-size:18.6px;transform:scaleX(0.9527);transform-origin:0 0">Which product or products would you like...</div>
<div class="t" style="left:1876.4px;top:732.1px;font-size:18.6px;transform:scaleX(0.9037);transform-origin:0 0">Response Match</div>
<div class="badge" style="left:2077px;top:722.0px"></div>
<div class="t" style="left:2087px;top:731.9px;font-size:18.6px;transform:scaleX(0.848);transform-origin:0 0">Success</div>
<div class="hl" style="left:581px;top:765.0px;width:1615px;background:#ebebeb"></div>
<div class="a" style="left:634px;top:765.0px;width:1px;height:1px;background:#f6f6f6"></div>
<div class="a" style="left:920px;top:765.0px;width:1px;height:1px;background:#f6f6f6"></div>
<div class="a" style="left:1144px;top:765.0px;width:1px;height:1px;background:#f6f6f6"></div>
<div class="a" style="left:1476px;top:765.0px;width:1px;height:1px;background:#f6f6f6"></div>
<div class="a" style="left:1851px;top:765.0px;width:1px;height:1px;background:#f6f6f6"></div>
<div class="a" style="left:2179px;top:765.0px;width:1px;height:1px;background:#f6f6f6"></div>
<div class="cb" style="left:597px;top:781.8px"></div>
<div class="t lnk" style="left:648.7px;top:784.6px;font-size:18.6px;transform:scaleX(0.9227);transform-origin:0 0">5kuLVQwhOtg1Grdq2guYxQ-us</div>
<div class="t lnk" style="left:935px;top:784.6px;font-size:18.6px;transform:scaleX(0.8995);transform-origin:0 0">P: Product</div>
<div class="t" style="left:1158.7px;top:784.6px;font-size:18.6px;transform:scaleX(0.9062);transform-origin:0 0">Television</div>
<div class="t" style="left:1491px;top:784.6px;font-size:18.6px;transform:scaleX(0.9329);transform-origin:0 0">Thank you for waiting, looks like we have t...</div>
<div class="t" style="left:1876.4px;top:784.6px;font-size:18.6px;transform:scaleX(0.9037);transform-origin:0 0">Response Match</div>
<div class="badge" style="left:2077px;top:774.5px"></div>
<div class="t" style="left:2087px;top:784.4px;font-size:18.6px;transform:scaleX(0.848);transform-origin:0 0">Success</div>
<div class="hl" style="left:581px;top:817.0px;width:1615px;background:#ebebeb"></div>
<div class="a" style="left:634px;top:817.0px;width:1px;height:1px;background:#f6f6f6"></div>
<div class="a" style="left:920px;top:817.0px;width:1px;height:1px;background:#f6f6f6"></div>
<div class="a" style="left:1144px;top:817.0px;width:1px;height:1px;background:#f6f6f6"></div>
<div class="a" style="left:1476px;top:817.0px;width:1px;height:1px;background:#f6f6f6"></div>
<div class="a" style="left:1851px;top:817.0px;width:1px;height:1px;background:#f6f6f6"></div>
<div class="a" style="left:2179px;top:817.0px;width:1px;height:1px;background:#f6f6f6"></div>
<div class="cb" style="left:597px;top:834.3px"></div>
<div class="t lnk" style="left:648.7px;top:837.1px;font-size:18.6px;transform:scaleX(0.9227);transform-origin:0 0">5kuLVQwhOtg1Grdq2guYxQ-us</div>
<div class="t lnk" style="left:935px;top:837.1px;font-size:18.6px;transform:scaleX(0.8766);transform-origin:0 0">P: Refund</div>
<div class="t" style="left:1158.7px;top:837.1px;font-size:18.6px;transform:scaleX(0.8988);transform-origin:0 0">Refund</div>
<div class="t" style="left:1491px;top:837.1px;font-size:18.6px;transform:scaleX(0.9211);transform-origin:0 0">Thank you so much, I will send the Refund...</div>
<div class="t" style="left:1876.4px;top:837.1px;font-size:18.6px;transform:scaleX(0.9063);transform-origin:0 0">Generative Answers</div>
<div class="badge" style="left:2077px;top:827.0px"></div>
<div class="t" style="left:2087px;top:836.9px;font-size:18.6px;transform:scaleX(0.848);transform-origin:0 0">Success</div>
<div class="hl" style="left:581px;top:870.0px;width:1615px;background:#ebebeb"></div>
<div class="a" style="left:634px;top:870.0px;width:1px;height:1px;background:#f6f6f6"></div>
<div class="a" style="left:920px;top:870.0px;width:1px;height:1px;background:#f6f6f6"></div>
<div class="a" style="left:1144px;top:870.0px;width:1px;height:1px;background:#f6f6f6"></div>
<div class="a" style="left:1476px;top:870.0px;width:1px;height:1px;background:#f6f6f6"></div>
<div class="a" style="left:1851px;top:870.0px;width:1px;height:1px;background:#f6f6f6"></div>
<div class="a" style="left:2179px;top:870.0px;width:1px;height:1px;background:#f6f6f6"></div>
<div class="cb" style="left:597px;top:886.8px"></div>
<div class="t lnk" style="left:648.7px;top:889.6px;font-size:18.6px;transform:scaleX(0.9227);transform-origin:0 0">5kuLVQwhOtg1Grdq2guYxQ-us</div>
<div class="t lnk" style="left:935px;top:889.6px;font-size:18.6px;transform:scaleX(0.8690);transform-origin:0 0">P: Feedback 1</div>
<div class="t" style="left:1158.7px;top:889.6px;font-size:18.6px;transform:scaleX(0.8008);transform-origin:0 0">Yes</div>
<div class="t" style="left:1491px;top:889.6px;font-size:18.6px;transform:scaleX(0.9276);transform-origin:0 0">No response, but attachments (Adaptive C...</div>
<div class="t" style="left:1876.4px;top:889.6px;font-size:18.6px;transform:scaleX(0.9210);transform-origin:0 0">Attachments (Ada...</div>
<div class="badge" style="left:2077px;top:879.5px"></div>
<div class="t" style="left:2087px;top:889.4px;font-size:18.6px;transform:scaleX(0.848);transform-origin:0 0">Success</div>
<div class="hl" style="left:581px;top:922.0px;width:1615px;background:#ebebeb"></div>
<div class="a" style="left:634px;top:922.0px;width:1px;height:1px;background:#f6f6f6"></div>
<div class="a" style="left:920px;top:922.0px;width:1px;height:1px;background:#f6f6f6"></div>
<div class="a" style="left:1144px;top:922.0px;width:1px;height:1px;background:#f6f6f6"></div>
<div class="a" style="left:1476px;top:922.0px;width:1px;height:1px;background:#f6f6f6"></div>
<div class="a" style="left:1851px;top:922.0px;width:1px;height:1px;background:#f6f6f6"></div>
<div class="a" style="left:2179px;top:922.0px;width:1px;height:1px;background:#f6f6f6"></div>
<div class="cb" style="left:597px;top:939.3px"></div>
<div class="t lnk" style="left:648.7px;top:942.1px;font-size:18.6px;transform:scaleX(0.9227);transform-origin:0 0">5kuLVQwhOtg1Grdq2guYxQ-us</div>
<div class="t lnk" style="left:935px;top:942.1px;font-size:18.6px;transform:scaleX(0.8749);transform-origin:0 0">P: Feedback 2</div>
<div class="t" style="left:1158.7px;top:942.1px;font-size:18.6px;transform:scaleX(0.8411);transform-origin:0 0">5</div>
<div class="t" style="left:1491px;top:942.1px;font-size:18.6px;transform:scaleX(0.9233);transform-origin:0 0">Thanks for your feedback.</div>
<div class="t" style="left:1876.4px;top:942.1px;font-size:18.6px;transform:scaleX(0.9037);transform-origin:0 0">Response Match</div>
<div class="badge" style="left:2077px;top:932.0px"></div>
<div class="t" style="left:2087px;top:941.9px;font-size:18.6px;transform:scaleX(0.848);transform-origin:0 0">Success</div>
<div class="hl" style="left:581px;top:975.0px;width:1615px;background:#ebebeb"></div>
<div class="a" style="left:634px;top:975.0px;width:1px;height:1px;background:#f6f6f6"></div>
<div class="a" style="left:920px;top:975.0px;width:1px;height:1px;background:#f6f6f6"></div>
<div class="a" style="left:1144px;top:975.0px;width:1px;height:1px;background:#f6f6f6"></div>
<div class="a" style="left:1476px;top:975.0px;width:1px;height:1px;background:#f6f6f6"></div>
<div class="a" style="left:1851px;top:975.0px;width:1px;height:1px;background:#f6f6f6"></div>
<div class="a" style="left:2179px;top:975.0px;width:1px;height:1px;background:#f6f6f6"></div>
<div class="cb" style="left:597px;top:991.8px"></div>
<div class="t lnk" style="left:648.7px;top:994.6px;font-size:18.6px;transform:scaleX(0.9227);transform-origin:0 0">5kuLVQwhOtg1Grdq2guYxQ-us</div>
<div class="t lnk" style="left:935px;top:994.6px;font-size:18.6px;transform:scaleX(0.8749);transform-origin:0 0">P: Feedback 3</div>
<div class="t" style="left:1158.7px;top:994.6px;font-size:18.6px;transform:scaleX(0.9503);transform-origin:0 0">No</div>
<div class="t" style="left:1491px;top:994.6px;font-size:18.6px;transform:scaleX(0.9294);transform-origin:0 0">Ok, goodbye.</div>
<div class="t" style="left:1876.4px;top:994.6px;font-size:18.6px;transform:scaleX(0.9037);transform-origin:0 0">Response Match</div>
<div class="badge" style="left:2077px;top:984.5px"></div>
<div class="t" style="left:2087px;top:994.4px;font-size:18.6px;transform:scaleX(0.848);transform-origin:0 0">Success</div>
<div class="a" style="left:2205px;top:615px;width:7px;height:404px;background:#b8b8b8;border-radius:4px"></div>
<div class="a" style="left:563px;top:1035px;width:1022px;height:8px;background:#b8b8b8;border-radius:4px"></div>
<div class="hl" style="left:581px;top:1050px;width:1638px;background:#e0e0e0"></div>
<div class="t" style="left:581.4px;top:1070.5px;font-size:18.6px;transform:scaleX(0.863);transform-origin:0 0;color:#424242">Rows: 8</div>
<div class="a" style="left:2195.5px;top:849px;width:1.5px;height:2px;background:#666"></div>
</div>
</body></html>
